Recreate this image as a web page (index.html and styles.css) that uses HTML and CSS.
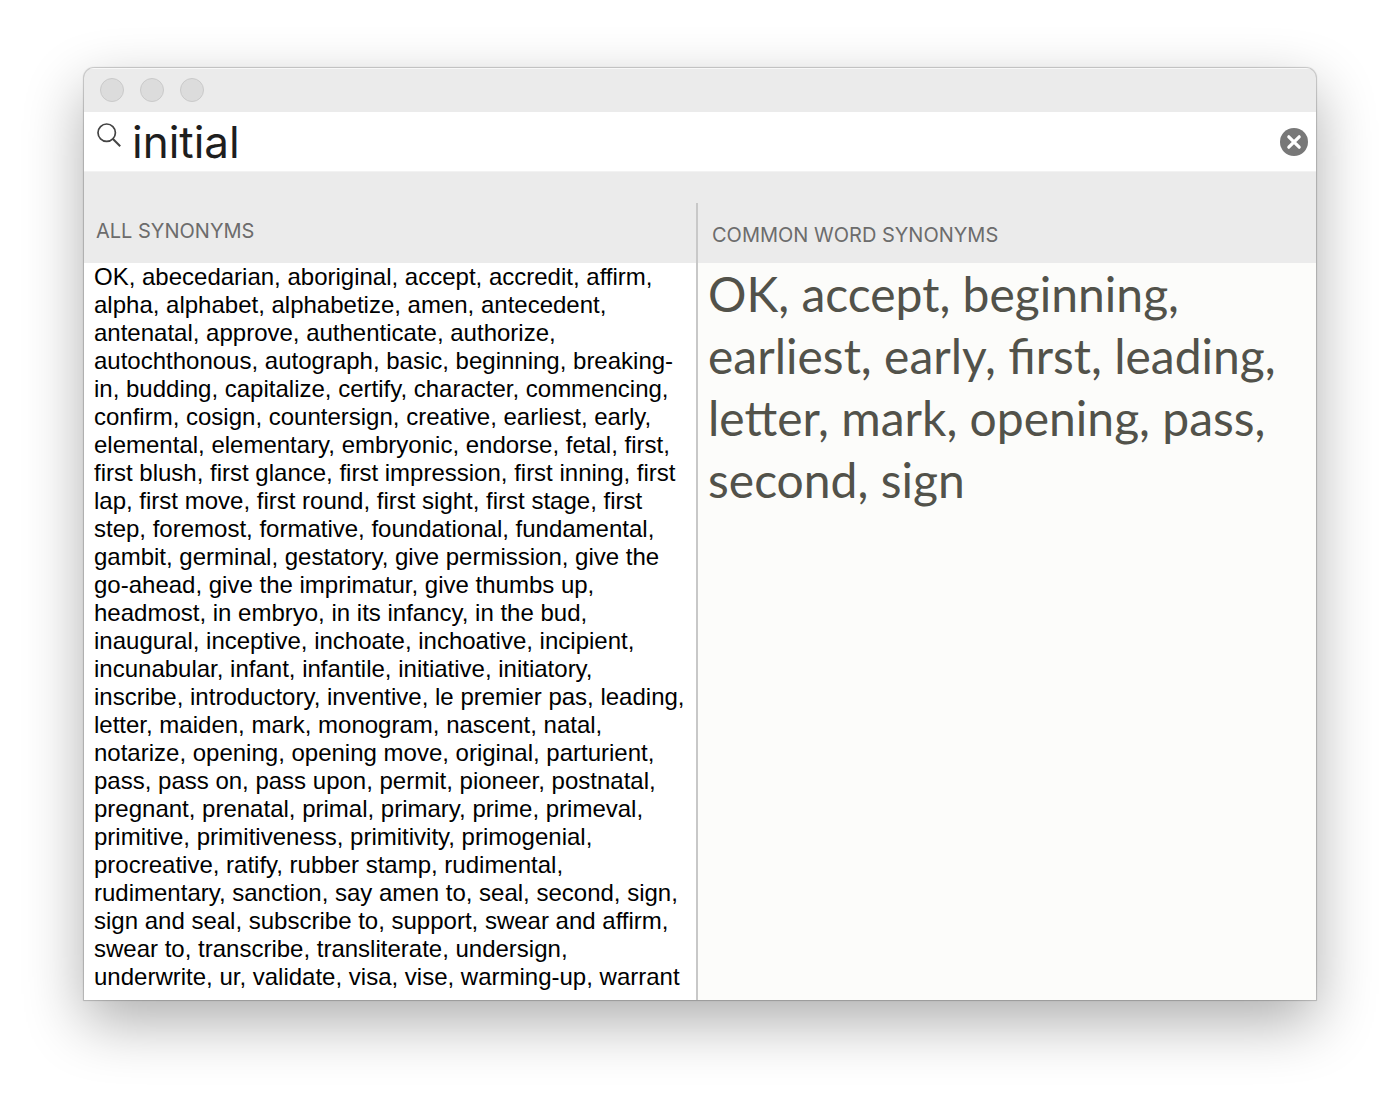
FILE: index.html
```
<!DOCTYPE html>
<html lang="en">
<head>
  <meta charset="UTF-8">
  <meta name="viewport" content="width=device-width, initial-scale=1.0">
  <title>Synonyms</title>
  <link rel="stylesheet" href="styles.css">
</head>
<body>
  <main class="window">
    <div class="titlebar">
      <button type="button" class="dot" aria-label="Close"></button>
      <button type="button" class="dot" aria-label="Minimize"></button>
      <button type="button" class="dot" aria-label="Zoom"></button>
    </div>

    <form class="search">
      <label for="word" class="search-icon" aria-label="Search">
        <svg width="24" height="24" viewBox="0 0 24 24" fill="none" stroke="#444" stroke-width="1.7">
          <circle cx="9.7" cy="9.7" r="8.7"/>
          <path d="M16 16l7.2 7.2" stroke-width="2"/>
        </svg>
      </label>
      <input type="text" id="word" name="word" value="initial" autocomplete="off" spellcheck="false">
      <button type="reset" class="clear" aria-label="Clear">
        <svg width="28" height="28" viewBox="0 0 28 28">
          <circle cx="14" cy="14" r="14" fill="#787878"/>
          <path d="M8.8 8.8l10.4 10.4M19.2 8.8L8.8 19.2" stroke="#fff" stroke-width="3.2" stroke-linecap="round"/>
        </svg>
      </button>
    </form>

    <div class="columns">
      <section class="column all">
        <h2>ALL SYNONYMS</h2>
        <p>
          OK, abecedarian, aboriginal, accept, accredit, affirm,<br>
          alpha, alphabet, alphabetize, amen, antecedent,<br>
          antenatal, approve, authenticate, authorize,<br>
          autochthonous, autograph, basic, beginning, breaking-<br>
          in, budding, capitalize, certify, character, commencing,<br>
          confirm, cosign, countersign, creative, earliest, early,<br>
          elemental, elementary, embryonic, endorse, fetal, first,<br>
          first blush, first glance, first impression, first inning, first<br>
          lap, first move, first round, first sight, first stage, first<br>
          step, foremost, formative, foundational, fundamental,<br>
          gambit, germinal, gestatory, give permission, give the<br>
          go-ahead, give the imprimatur, give thumbs up,<br>
          headmost, in embryo, in its infancy, in the bud,<br>
          inaugural, inceptive, inchoate, inchoative, incipient,<br>
          incunabular, infant, infantile, initiative, initiatory,<br>
          inscribe, introductory, inventive, le premier pas, leading,<br>
          letter, maiden, mark, monogram, nascent, natal,<br>
          notarize, opening, opening move, original, parturient,<br>
          pass, pass on, pass upon, permit, pioneer, postnatal,<br>
          pregnant, prenatal, primal, primary, prime, primeval,<br>
          primitive, primitiveness, primitivity, primogenial,<br>
          procreative, ratify, rubber stamp, rudimental,<br>
          rudimentary, sanction, say amen to, seal, second, sign,<br>
          sign and seal, subscribe to, support, swear and affirm,<br>
          swear to, transcribe, transliterate, undersign,<br>
          underwrite, ur, validate, visa, vise, warming-up, warrant
        </p>
      </section>
      <section class="column common">
        <h2>COMMON WORD SYNONYMS</h2>
        <p>
          OK, accept, beginning,<br>
          earliest, early, first, leading,<br>
          letter, mark, opening, pass,<br>
          second, sign
        </p>
      </section>
    </div>
  </main>
</body>
</html>
```
FILE: styles.css
```
* {
  box-sizing: border-box;
}
body {
  margin: 0;
  padding: 68px 84px 100px;
  background: white;
  font-family: Inter, "Liberation Sans", sans-serif;
}
.window {
  background: #ebebeb;
  border-radius: 10px 10px 0 0;
  box-shadow: 0 0 1px 1px rgba(0, 0, 0, 0.2), 0 22px 60px rgba(0, 0, 0, 0.32);
  overflow: hidden;
}
.titlebar {
  display: flex;
  align-items: center;
  gap: 16px;
  height: 44px;
  padding: 0 16px 2px;
  border-top: 1px solid #f8f8f8;
}
.dot {
  width: 24px;
  height: 24px;
  padding: 0;
  border: 1px solid #c9c9c9;
  border-radius: 50%;
  background: #dcdcdc;
}
.search {
  display: flex;
  align-items: center;
  height: 60px;
  padding: 0 8px 0 13px;
  background: white;
  border-bottom: 1px solid #f2f2f2;
}
.search-icon {
  display: flex;
  padding-bottom: 13px;
}
.search input {
  flex: 1;
  min-width: 0;
  height: 60px;
  margin: 0;
  padding: 0 8px 0 11px;
  border: none;
  outline: none;
  background: none;
  color: #1e1e1e;
  font-family: inherit;
  font-size: 44px;
}
.clear {
  display: flex;
  padding: 0;
  border: none;
  background: none;
}
.columns {
  display: grid;
  grid-template-columns: 153fr 155fr;
  padding-top: 31px;
}
.column {
  display: flex;
  flex-direction: column;
}
h2 {
  height: 60px;
  margin: 0;
  color: #6c6c6c;
  font-size: 20px;
  font-weight: 400;
  line-height: 24px;
}
p {
  flex: 1;
  margin: 0;
  white-space: nowrap;
}
.all h2 {
  padding: 16px 12px;
}
.all p {
  padding: 0 10px 9px;
  background: white;
  color: black;
  font-family: "Liberation Sans", Arial, sans-serif;
  font-size: 24px;
  line-height: 28px;
}
.common {
  border-left: 2px solid #c8c8c8;
}
.common h2 {
  padding: 20px 14px;
}
.common p {
  padding: 0 10px;
  background: #fcfcfa;
  color: #52524a;
  font-family: Lato, sans-serif;
  font-size: 48px;
  line-height: 62px;
}
```
